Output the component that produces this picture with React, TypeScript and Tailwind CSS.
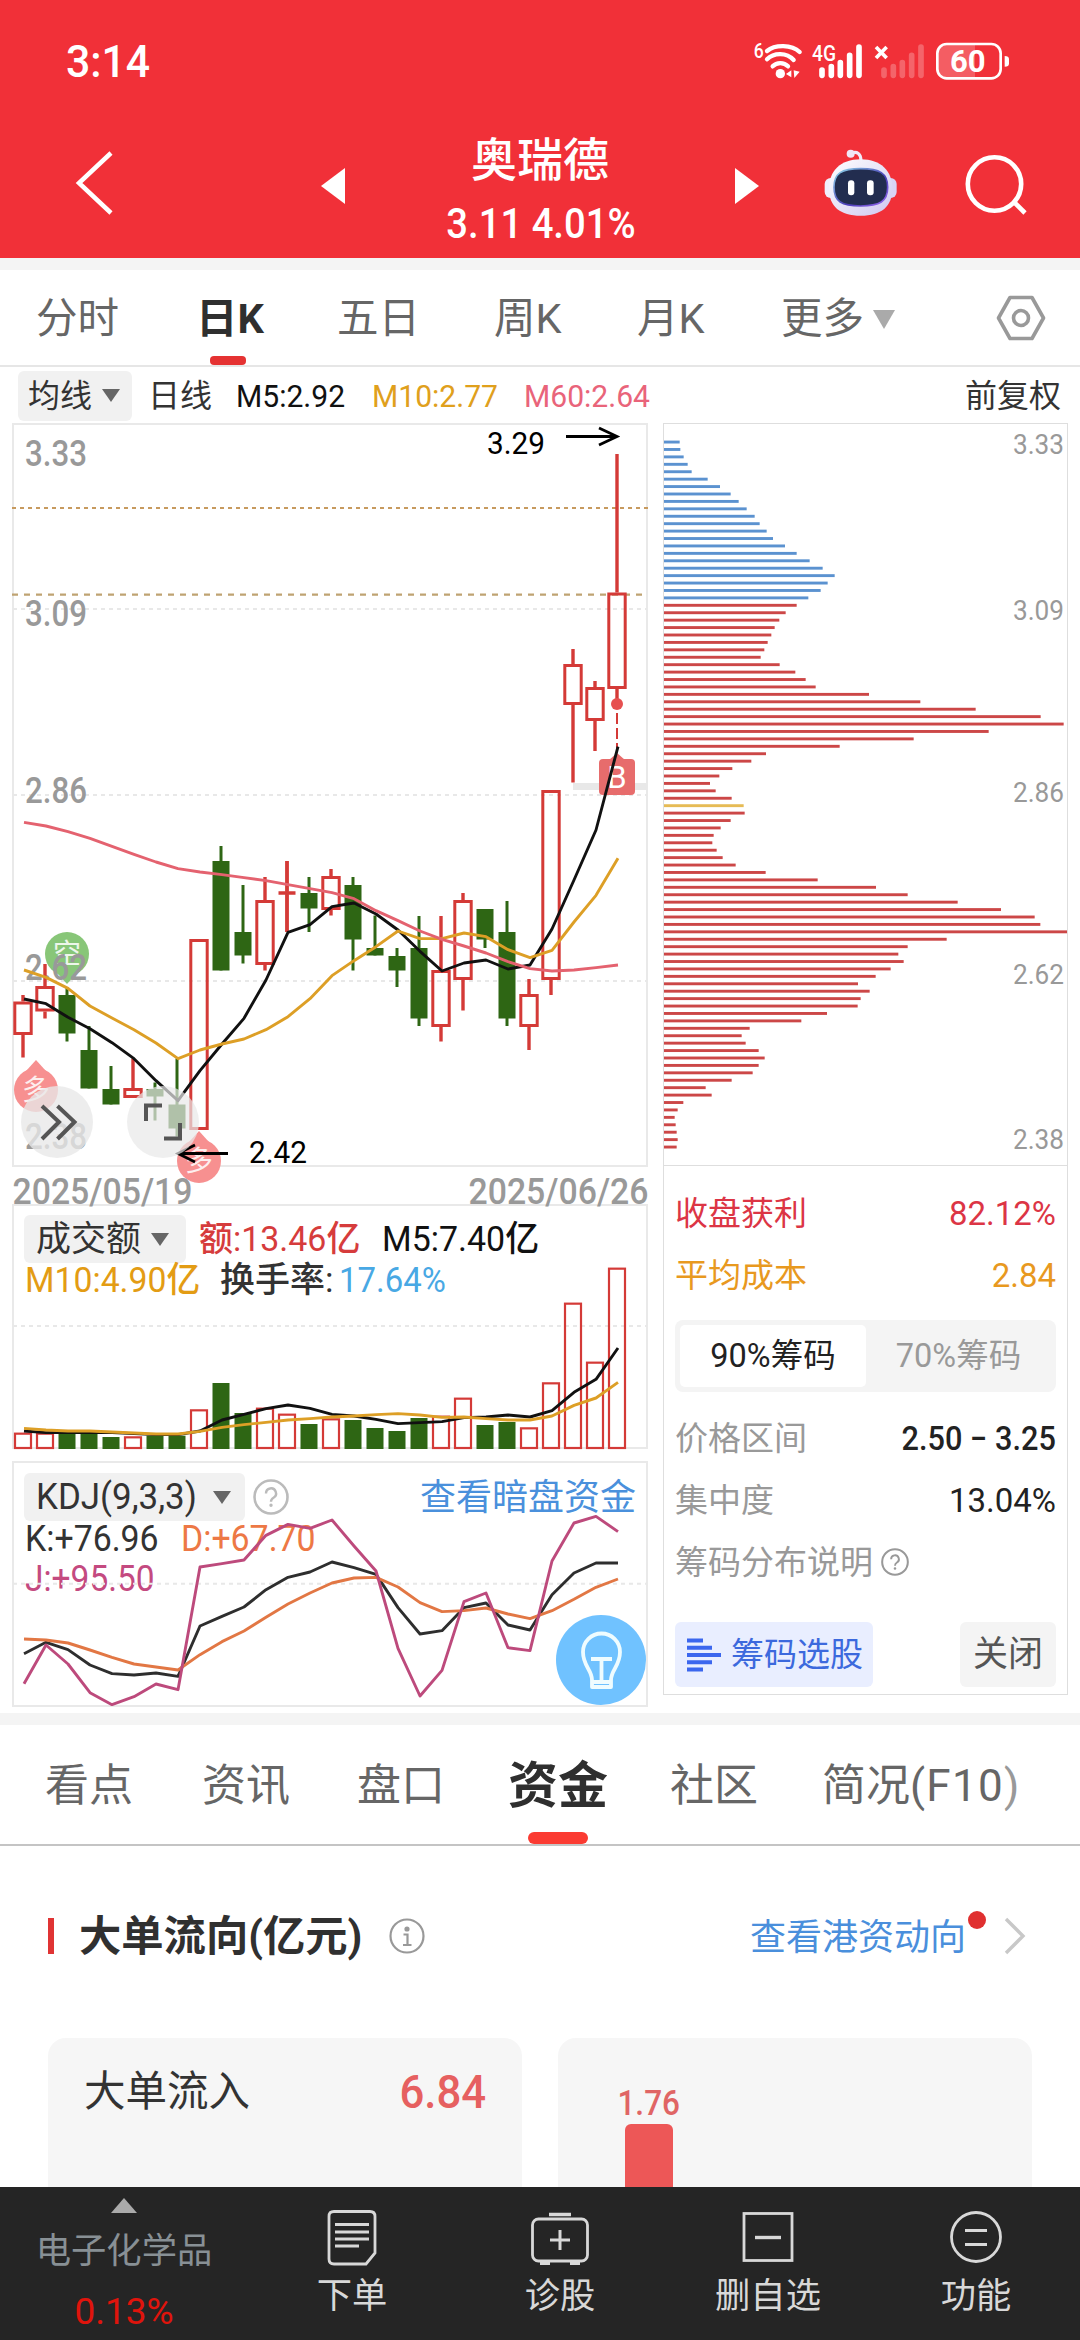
import type { ReactNode } from "react";

const STEP = 22;
const FIRST_X = 23;
const RED = "#d43a37";
const GREEN = "#2e6614";

type Candle = [up: boolean, high: number, top: number, bottom: number, low: number];

const CANDLES: Candle[] = [
  [true, 995, 1001.5, 1035, 1057.5],
  [true, 964, 986, 1011.5, 1018.5],
  [false, 987.5, 995, 1033.5, 1041.5],
  [false, 1026, 1050, 1088.5, 1088.5],
  [false, 1066, 1089, 1104.5, 1104.5],
  [true, 1058.5, 1088, 1098, 1098],
  [false, 1082.5, 1089, 1096.5, 1120.5],
  [false, 1058.5, 1104.5, 1128.5, 1136.5],
  [true, 939, 939, 1130, 1130],
  [false, 846, 861, 970.5, 970.5],
  [false, 885, 932, 955.5, 963.5],
  [true, 877, 900, 965, 970.5],
  [true, 861, 891.5, 894.5, 932],
  [false, 877, 893, 908.5, 932],
  [true, 869, 876, 910, 915.5],
  [false, 877, 885, 939.5, 970.5],
  [false, 915.5, 948, 955.5, 955.5],
  [false, 948, 956, 970.5, 987],
  [false, 916, 948, 1018.5, 1026],
  [true, 916, 970, 1027, 1041.5],
  [true, 893, 900, 980, 1010.5],
  [false, 909, 909, 939.5, 948],
  [false, 901, 932, 1018.5, 1026],
  [true, 979, 994, 1027, 1050],
  [true, 790, 790, 980, 995],
  [true, 649, 664, 705, 782.5],
  [true, 681, 687, 721, 751],
  [true, 454, 592.5, 689, 705],
];

// line series are kept in thirds of a pixel below each chart's base
const MA5 = [627, 641, 682, 716, 758, 806, 872, 932, 842, 762, 685, 570, 427, 404, 350, 339, 372, 420, 484, 543, 519, 510, 537, 525, 417, 270, 120, -130];
const MA10 = [540, 562, 595, 648, 684, 719, 759, 806, 780, 762, 747, 719, 680, 626, 557, 512, 470, 423, 446, 446, 429, 440, 479, 503, 481, 396, 316, 205];
const MA60 = [97, 108, 125, 145, 169, 193, 216, 236, 246, 254, 263, 272, 284, 296, 308, 326, 362, 392, 423, 448, 468, 489, 515, 536, 543, 540, 533, 525];

const VOLUME = [698, 698, 702, 702, 711, 709, 707, 707, 628, 549, 639, 623, 641, 672, 655, 660, 684, 693, 654, 647, 593, 675, 666, 682, 547, 308, 485, 203];
const VOL5 = [693, 698, 698, 698, 698, 701, 704, 704, 693, 660, 643, 626, 615, 625, 643, 648, 658, 671, 668, 665, 653, 651, 645, 651, 632, 577, 538, 444];
const VOL10 = [685, 690, 693, 693, 696, 699, 702, 702, 694, 682, 674, 667, 660, 656, 651, 648, 644, 641, 645, 652, 651, 656, 660, 660, 648, 616, 594, 547];

const K_LINE = [596, 562, 584, 630, 656, 660, 654, 664, 513, 484, 456, 404, 367, 351, 321, 338, 358, 458, 537, 527, 458, 444, 510, 525, 419, 354, 324, 324];
const D_LINE = [552, 555, 564, 585, 607, 627, 636, 645, 599, 560, 528, 487, 447, 414, 384, 369, 367, 396, 443, 470, 467, 459, 477, 491, 467, 433, 397, 372];
const J_LINE = [686, 570, 627, 713, 749, 725, 687, 704, 336, 326, 315, 241, 208, 220, 195, 273, 348, 580, 723, 646, 440, 414, 578, 587, 318, 204, 184, 230];

const CHIPS = [
  89, 91, 101, 113, 125, 173, 210, 242, 266, 290, 314, 329, 350, 369, 405, 440, 479, 518, 554, 533, 512, 475,
  440, 407, 388, 374, 364, 353, 343, 332, 389, 436, 467, 497, 657, 811, 977, 1172, 1241, 1016, 791, 569, 348, 304, 247, 208, 180,
  197, 245, 281, 284, 242, 212, 191, 187, 200, 218, 257, 347, 503, 678, 773, 923, 1053, 1154, 1171, 1251,
  890, 773, 745, 761, 722, 677, 624, 659, 632, 623, 531, 454, 299, 275, 287, 326, 344, 326, 308, 245,
  167, 185, 100, 83, 74, 77, 80, 83, 80,
];
const BLUE_COUNT = 22;
const AVERAGE_INDEX = 49;

const xAt = (i: number) => FIRST_X + i * STEP;

function Series({ values, base, color }: { values: number[]; base: number; color: string }) {
  const points = values.map((v, i) => `${xAt(i) + 1},${base + v / 3}`).join(" ");
  return <polyline points={points} fill="none" stroke={color} strokeWidth="2.9" strokeLinejoin="round" />;
}

function Caret({ className = "" }: { className?: string }) {
  return (
    <svg viewBox="0 0 18 13" className={`h-[13px] w-[18px] ${className}`}>
      <path d="M0 0H18L9 13Z" fill="currentColor" />
    </svg>
  );
}

function Help({ className }: { className: string }) {
  return (
    <svg viewBox="0 0 36 36" fill="none" stroke="currentColor" className={className}>
      <circle cx="18" cy="18" r="16.5" strokeWidth="2.6" />
      <path d="M13 14.5a5 5 0 1 1 7.5 4.2c-1.7 1-2.5 1.9-2.5 4" strokeWidth="2.4" />
      <circle cx="18" cy="26.3" r="0.9" strokeWidth="1.6" />
    </svg>
  );
}

function StatusIcons() {
  return (
    <svg viewBox="60 40 790 126" className="h-[42px] w-[263.33px]" fill="#fff">
      <text x="71" y="95" fontSize="60" fontWeight="500" textLength="30" lengthAdjust="spacingAndGlyphs">6</text>
      <g fill="none" stroke="#fff" strokeWidth="13" strokeLinecap="round">
        <path d="M111 73C135 53 185 53 209 76" />
        <path d="M111 98C132 77 170 77 191 100" />
        <path d="M128 119C140 106 162 106 174 119" />
      </g>
      <circle cx="151" cy="141" r="14" />
      <path d="M168 142L184 131V152ZM191 131L209 135L193 154Z" />
      <text x="246" y="103" fontSize="64" fontWeight="500" textLength="72" lengthAdjust="spacingAndGlyphs">4G</text>
      <g stroke="#fff" strokeWidth="17" strokeLinecap="round">
        <path d="M276 130V146M304 120V146M331 108V146M359 86V146M387 61V146" />
        <path d="M462 130V146M490 120V146M517 108V146M545 86V146M573 61V146" opacity="0.25" />
        <path d="M438 61L470 94M470 61L438 94" strokeWidth="11" strokeLinecap="butt" />
      </g>
      <path d="M650 53H735V153H650Q623 153 623 126V80Q623 53 650 53Z" opacity="0.22" />
      <rect x="622" y="52" width="190" height="103" rx="28" fill="none" stroke="#fff" strokeWidth="8" />
      <path d="M824 88Q837 88 837 97V111Q837 120 824 120Z" />
      <text x="660" y="137" fontSize="95" fontWeight="700" textLength="107" lengthAdjust="spacingAndGlyphs">60</text>
    </svg>
  );
}

function Robot() {
  return (
    <svg viewBox="280 370 226 208" className="h-[69.33px] w-[75.33px]">
      <defs>
        <linearGradient id="shell" x1="0" y1="0" x2="1" y2="1">
          <stop offset="0" stopColor="#ffffff" />
          <stop offset="1" stopColor="#cfc8f0" />
        </linearGradient>
        <linearGradient id="rim" x1="0" y1="0" x2="1" y2="1">
          <stop offset="0" stopColor="#8fd8e8" />
          <stop offset="0.6" stopColor="#4a3cb8" />
          <stop offset="1" stopColor="#9a6cf0" />
        </linearGradient>
      </defs>
      <path d="M365 386C382 378 394 388 394 408" fill="none" stroke="#f1eafa" strokeWidth="9" />
      <circle cx="363" cy="387" r="12" fill="#f1e6f6" />
      <rect x="285" y="460" width="40" height="60" rx="18" fill="#f0eefc" />
      <rect x="461" y="460" width="40" height="60" rx="18" fill="#d9d3f5" />
      <path d="M393 404C455 404 488 440 488 492C488 545 455 573 393 573C331 573 298 545 298 492C298 440 331 404 393 404Z" fill="url(#shell)" />
      <path d="M393 432C450 432 474 445 474 488C474 531 450 544 393 544C336 544 313 531 313 488C313 445 336 432 393 432Z" fill="#222d4f" stroke="url(#rim)" strokeWidth="5" />
      <rect x="355" y="467" width="19" height="45" rx="9" fill="#fff" />
      <rect x="412" y="467" width="20" height="45" rx="9" fill="#fff" />
    </svg>
  );
}

function Header() {
  return (
    <header className="h-[258px] bg-[#f13038] text-white">
      <div className="flex h-[122px] items-center justify-between pr-[67px] pl-[66px]">
        <span className="origin-left scale-x-[0.95] text-[45px] leading-none font-medium">3:14</span>
        <StatusIcons />
      </div>
      <div className="flex h-[136px]">
        <div className="w-[321px] pt-[28px] pl-[74px]">
          <svg viewBox="0 0 40 66" className="h-[66px] w-[40px]" fill="none" stroke="#fff" strokeWidth="4.5">
            <path d="M37 3L5 33L37 63" />
          </svg>
        </div>
        <div className="flex w-[438px] justify-between">
          <svg viewBox="0 0 24 36" className="mt-[46px] h-[36px] w-[24px]"><path d="M24 0V36L0 18Z" fill="#fff" /></svg>
          <div className="flex flex-col items-center pt-[15px]">
            <span className="text-[46px] leading-[46px] font-medium">奥瑞德</span>
            <span className="mt-[18px] ml-[2px] scale-x-[0.91] text-[42px] leading-[46px] font-medium whitespace-nowrap">3.11 4.01%</span>
          </div>
          <svg viewBox="0 0 24 36" className="mt-[46px] h-[36px] w-[24px]"><path d="M0 0V36L24 18Z" fill="#fff" /></svg>
        </div>
        <div className="flex pt-[26px] pl-[64px]">
          <Robot />
          <svg viewBox="0 0 66 66" className="mt-[6px] ml-[66px] h-[66px] w-[66px]" fill="none" stroke="#fff" strokeWidth="4.6">
            <circle cx="30.5" cy="30" r="26.7" />
            <path d="M50 48L61 59" />
          </svg>
        </div>
      </div>
    </header>
  );
}

function PeriodTabs() {
  return (
    <nav className="flex h-[97px] items-center border-b-2 border-[#e6e6e6] pl-[36px] text-[41.5px] leading-none text-[#666]">
      <span className="w-[160px] pt-[3px]">分时</span>
      <span className="relative flex h-full w-[141px] items-center pt-[3px] font-bold text-[#2f2f2f]">
        日K
        <i className="absolute bottom-0 left-[14px] h-[9px] w-[36px] rounded-[4px] bg-[#e53232]" />
      </span>
      <span className="w-[157px] pt-[3px]">五日</span>
      <span className="w-[143px] pt-[3px]">周K</span>
      <span className="w-[144px] pt-[3px]">月K</span>
      <span className="flex w-[215px] items-center gap-[9px] pt-[3px]">
        更多
        <svg viewBox="0 0 22 19" className="h-[19px] w-[22px]"><path d="M0 0H22L11 19Z" fill="#aaa" /></svg>
      </span>
      <svg viewBox="0 0 50 46" className="h-[46px] w-[50px]" fill="none" stroke="#999" strokeWidth="3.6" strokeLinejoin="round">
        <path d="M14 2.5H36L47.500 23L36 43.500H14L2.500 23Z" />
        <circle cx="25" cy="23" r="7.5" />
      </svg>
    </nav>
  );
}

function AverageRow() {
  return (
    <div className="flex h-[57px] items-center text-[32px] leading-none whitespace-nowrap text-[#333]">
      <span className="ml-[18px] flex h-[50px] w-[114px] items-center gap-[10px] rounded-[6px] bg-[#f1f1f1] pl-[10px]">
        均线 <Caret className="text-[#666]" />
      </span>
      <span className="ml-[16px] w-[88px]">日线</span>
      <span className="w-[136px] origin-left scale-x-[0.94] font-[450] text-[#111]">M5:2.92</span>
      <span className="w-[152px] origin-left scale-x-[0.94] font-[450] text-[#e0a01c]">M10:2.77</span>
      <span className="origin-left scale-x-[0.94] font-[450] text-[#e9647a]">M60:2.64</span>
      <span className="mr-[19px] ml-auto">前复权</span>
    </div>
  );
}

function AxisLabel({ x, y, children }: { x: number; y: number; children: string }) {
  return (
    <text x={x} y={y} fontSize="36" fontWeight="500" fill="#999" textLength="62" lengthAdjust="spacingAndGlyphs">
      {children}
    </text>
  );
}

function Marker({ x, y, up, color, children }: { x: number; y: number; up: boolean; color: string; children: string }) {
  const d = up ? -1 : 1;
  return (
    <g>
      <path d={`M${x - 10} ${y + d * 19}L${x} ${y + d * 30}L${x + 10} ${y + d * 19}Z`} fill={color} />
      <circle cx={x} cy={y} r="22" fill={color} />
      <text x={x} y={y + 10} fontSize="28" textAnchor="middle" fill="#fff" opacity="0.85">{children}</text>
    </g>
  );
}

function CandleChart() {
  return (
    <svg viewBox="0 424 650 780" className="relative z-10 block h-[780px] w-[650px] overflow-visible">
      <rect x="13" y="424" width="634" height="742" fill="none" stroke="#e9e9e9" strokeWidth="2" />
      <path d="M13 609H647M13 795H647M13 981H647" stroke="#e8e8e8" strokeWidth="2" strokeDasharray="4 4" />
      <path d="M12 508H648" stroke="#c79a5e" strokeWidth="2.2" strokeDasharray="4 4" />
      <path d="M12 594.700H648" stroke="#bfa372" strokeWidth="2.2" strokeDasharray="6 6" />
      <rect x="573" y="783" width="74" height="7" fill="#e8e8e8" />
      <Marker x={67} y={954} up={false} color="#88c678">空</Marker>
      <Marker x={36} y={1090} up color="#f79090">多</Marker>
      <Marker x={199} y={1161} up color="#f79090">多</Marker>
      <AxisLabel x={25} y={466}>3.33</AxisLabel>
      <AxisLabel x={25} y={626}>3.09</AxisLabel>
      <AxisLabel x={25} y={803}>2.86</AxisLabel>
      <AxisLabel x={25} y={979.5}>2.62</AxisLabel>
      <AxisLabel x={25} y={1148.5}>2.38</AxisLabel>
      {CANDLES.map(([up, high, top, bottom, low], i) => {
        const x = xAt(i);
        return up ? (
          <g key={i} fill="none" stroke={RED} strokeWidth="3">
            <path d={`M${x} ${high}V${top}M${x} ${bottom}V${low}`} strokeWidth="3.4" />
            {bottom - top < 5 ? (
              <path d={`M${x} ${high}V${low}M${x - 8.5} ${top + 1.5}H${x + 8.5}`} strokeWidth="3.4" />
            ) : (
              <rect x={x - 8.2} y={top + 1.5} width="16.4" height={bottom - top - 3} />
            )}
          </g>
        ) : (
          <g key={i}>
            <path d={`M${x} ${high}V${low}`} stroke={GREEN} strokeWidth="3" />
            <rect x={x - 8.5} y={top} width="17" height={bottom - top} fill={GREEN} />
          </g>
        );
      })}
      <circle cx="617" cy="704" r="6" fill="#e65050" />
      <path d="M617 713V748" stroke={RED} strokeWidth="2" strokeDasharray="11 4" />
      <path d="M609 760L617 753L625 760Z" fill="#e76c6c" />
      <rect x="599" y="759" width="36" height="36" rx="4" fill="#e76c6c" />
      <text x="617" y="788" fontSize="31" textAnchor="middle" fill="#fff">B</text>
      <Series values={MA5} base={790} color="#111" />
      <Series values={MA10} base={790} color="#dd9f26" />
      <Series values={MA60} base={790} color="#e4626f" />
      <g fill="none" stroke="#000" strokeWidth="2.8">
        <path d="M566 436.500H617M599 428L617 436.500L599 445" />
        <path d="M228 1153.500H178M195 1145L178 1153.500L195 1162" />
      </g>
      <text x="487" y="453.5" fontSize="31" textLength="58" lengthAdjust="spacingAndGlyphs">3.29</text>
      <text x="249" y="1162.5" fontSize="31" textLength="58" lengthAdjust="spacingAndGlyphs">2.42</text>
      <circle cx="57" cy="1122" r="36" fill="#e8e8e8" opacity="0.78" />
      <circle cx="163" cy="1122" r="36" fill="#e8e8e8" opacity="0.7" />
      <g fill="none" stroke="#555" strokeWidth="4">
        <path d="M42 1106L59 1122L42 1139M57.500 1106L74.500 1122L57.500 1139" />
        <path d="M146 1121V1105.500H162M164 1138.500H180V1123" />
      </g>
      <g fontSize="36" fontWeight="500" fill="#999">
        <text x="12.5" y="1203.5" textLength="180" lengthAdjust="spacingAndGlyphs">2025/05/19</text>
        <text x="468.5" y="1203.5" textLength="180" lengthAdjust="spacingAndGlyphs">2025/06/26</text>
      </g>
    </svg>
  );
}

function VolumePanel() {
  return (
    <section className="relative h-[257px] w-[650px]">
      <svg viewBox="0 1204 650 257" className="absolute inset-0 h-full w-full">
        <rect x="13" y="1205" width="634" height="243" fill="none" stroke="#e9e9e9" strokeWidth="2" />
        <path d="M13 1326H647" stroke="#e8e8e8" strokeWidth="2" strokeDasharray="4 4" />
        {VOLUME.map((v, i) => {
          const y = 1200 + v / 3;
          const up = CANDLES[i][0];
          return (
            <rect
              key={i}
              x={xAt(i) - (up ? 8 : 8.5)}
              y={up ? y + 1 : y}
              width={up ? 16 : 17}
              height={1449 - y - (up ? 2 : 0)}
              fill={up ? "none" : GREEN}
              stroke={up ? RED : "none"}
              strokeWidth="2.2"
            />
          );
        })}
        <Series values={VOL5} base={1200} color="#111" />
        <Series values={VOL10} base={1200} color="#dd9f26" />
      </svg>
      <div className="relative text-[35px] leading-none font-[450] whitespace-nowrap">
        <div className="flex items-center pt-[11px]">
          <span className="ml-[24px] flex h-[48px] w-[162px] items-center gap-[10px] rounded-[6px] bg-[#f1f1f1] pl-[12px] font-normal text-[#333]">
            成交额 <Caret className="text-[#666]" />
          </span>
          <span className="ml-[13px] w-[183px] origin-left scale-x-[0.97] text-[#d63c3c]">额:13.46亿</span>
          <span className="origin-left scale-x-[0.97] text-[#111]">M5:7.40亿</span>
        </div>
        <div className="flex h-[34px] items-center pl-[25px]">
          <span className="w-[195px] origin-left scale-x-[0.965] text-[#e39c14]">M10:4.90亿</span>
          <span className="w-[119px] text-[#333]">换手率:</span>
          <span className="origin-left scale-x-[0.94] text-[#48a8e4]">17.64%</span>
        </div>
      </div>
    </section>
  );
}

function KdjPanel() {
  return (
    <section className="relative h-[252px] w-[650px]">
      <div className="text-[36px] leading-none font-[450] whitespace-nowrap">
        <div className="flex items-center pt-[12px]">
          <span className="ml-[24px] flex h-[48px] w-[221px] items-center rounded-[6px] bg-[#f1f1f1] pl-[12px] text-[#333]">
            <span className="w-[177px]">
              <span className="inline-block origin-left scale-x-[0.97]">KDJ(9,3,3)</span>
            </span>
            <Caret className="text-[#666]" />
          </span>
          <Help className="ml-[8px] h-[36px] w-[36px] text-[#bbb]" />
          <span className="mr-[14px] ml-auto pt-[2px] text-[36px] font-normal text-[#4a90dc]">查看暗盘资金</span>
        </div>
        <div className="flex h-[36px] items-center pl-[25px]">
          <span className="w-[156px] origin-left scale-x-[0.94] text-[#333]">K:+76.96</span>
          <span className="origin-left scale-x-[0.94] text-[#ed7845]">D:+67.70</span>
        </div>
        <div className="flex h-[44px] items-center pl-[25px]">
          <span className="origin-left scale-x-[0.93] text-[#c44a80]">J:+95.50</span>
        </div>
      </div>
      <svg viewBox="0 1461 650 252" className="absolute inset-0 h-full w-full">
        <rect x="13" y="1462" width="634" height="244" fill="none" stroke="#e9e9e9" strokeWidth="2" />
        <path d="M13 1583.700H647" stroke="#e8e8e8" strokeWidth="2" strokeDasharray="4 4" />
        <Series values={K_LINE} base={1455} color="#2e2e2e" />
        <Series values={D_LINE} base={1455} color="#e27744" />
        <Series values={J_LINE} base={1455} color="#bd4a7c" />
        <circle cx="601" cy="1660" r="45" fill="#70c2ff" />
        <g fill="none" stroke="#effcff" strokeWidth="3.8" strokeLinejoin="round">
          <path d="M592 1680C592 1670 583 1666 583 1652A18.500 18.500 0 0 1 620 1652C620 1666 611 1670 611 1680V1687H592ZM592 1682H611" />
          <path d="M591 1659H612M601.500 1659V1680" />
        </g>
      </svg>
    </section>
  );
}

function ChipRow({ label, value, className = "" }: { label: string; value: string; className?: string }) {
  return (
    <div className={`flex items-center justify-between ${className}`}>
      <span>{label}</span>
      <span>{value}</span>
    </div>
  );
}

function ChipPanel() {
  return (
    <aside className="-mt-px ml-[13px] h-[1272px] w-[405px] border border-[#dedede] text-[33px] leading-none">
      <svg viewBox="664 424 403 741" className="block h-[741px] w-[403px] overflow-visible">
        {CHIPS.map((end, i) => (
          <rect
            key={i}
            x="664"
            y={442 + i * 7.421 - 1.4}
            width={(end - 42) / 3}
            height="2.9"
            fill={i < BLUE_COUNT ? "#5b92d0" : i === AVERAGE_INDEX ? "#e6bb55" : "#cc4747"}
          />
        ))}
        <g fontSize="28" fill="#999">
          <text x="1013" y="453.5" textLength="51" lengthAdjust="spacingAndGlyphs">3.33</text>
          <text x="1013" y="619.5" textLength="51" lengthAdjust="spacingAndGlyphs">3.09</text>
          <text x="1013" y="801.5" textLength="51" lengthAdjust="spacingAndGlyphs">2.86</text>
          <text x="1013" y="983.5" textLength="51" lengthAdjust="spacingAndGlyphs">2.62</text>
          <text x="1013" y="1149" textLength="51" lengthAdjust="spacingAndGlyphs">2.38</text>
        </g>
      </svg>
      <div className="h-[529px] border-t border-[#dedede] px-[11px] pt-[16px]">
        <ChipRow label="收盘获利" value="82.12%" className="h-[62px] text-[#dc3545]" />
        <ChipRow label="平均成本" value="2.84" className="h-[62px] text-[#e8991f]" />
        <div className="mt-[14px] flex h-[72px] items-center rounded-[8px] bg-[#f4f4f4] p-[5px] text-[32.5px]">
          <span className="flex h-full w-[186px] items-center justify-center rounded-[5px] bg-white text-[#222]">90%筹码</span>
          <span className="flex-1 text-center text-[#999]">70%筹码</span>
        </div>
        <div className="mt-[15px] flex h-[62px] items-center justify-between text-[#999]">
          <span>价格区间</span>
          <span className="origin-right scale-x-[0.93] font-medium text-[#222]">2.50 − 3.25</span>
        </div>
        <div className="flex h-[62px] items-center justify-between text-[#999]">
          <span>集中度</span>
          <span className="text-[#222]">13.04%</span>
        </div>
        <div className="flex h-[62px] items-center gap-[8px] text-[#999]">
          筹码分布说明 <Help className="h-[28px] w-[28px]" />
        </div>
        <div className="mt-[29px] flex justify-between">
          <span className="flex h-[65px] w-[198px] items-center gap-[10px] rounded-[6px] bg-[#e9eeff] pl-[12px] text-[#3c69dd]">
            <svg viewBox="0 0 34 34" className="h-[34px] w-[34px]" stroke="#3b66ee" strokeWidth="4">
              <path d="M0 2.500H16M0 9.700H25M0 17H34M0 24.200H25M0 31.500H16" />
            </svg>
            筹码选股
          </span>
          <span className="flex h-[65px] w-[96px] items-center justify-center rounded-[6px] bg-[#f4f4f4] text-[35px] text-[#555]">关闭</span>
        </div>
      </div>
    </aside>
  );
}

function SectionTabs() {
  return (
    <nav className="flex h-[121px] items-center border-b-2 border-[#c4c4c4] pl-[45px] text-[44px] leading-none whitespace-nowrap text-[#666]">
      <span className="w-[157px] pt-[3px]">看点</span>
      <span className="w-[155px] pt-[3px]">资讯</span>
      <span className="w-[151px] pt-[3px]">盘口</span>
      <span className="relative flex h-full w-[162px] items-center pt-[2px] text-[50px] font-bold text-[#2f2f2f]">
        资金
        <i className="absolute bottom-0 left-[20px] h-[12px] w-[60px] rounded-[6px] bg-[#fb3b32]" />
      </span>
      <span className="w-[152px] pt-[3px]">社区</span>
      <span className="pt-[3px]">
        简况<span className="tracking-[1.3px]">(F10<span className="text-[#999]">)</span></span>
      </span>
    </nav>
  );
}

function FundFlow() {
  return (
    <section className="h-[341px] overflow-hidden">
      <div className="flex h-[180px] items-center pl-[48px]">
        <i className="h-[36px] w-[6px] bg-[#e03434]" />
        <h2 className="ml-[25px] pt-[2px] text-[42.3px] leading-none font-bold text-[#303030]">大单流向(亿元)</h2>
        <svg viewBox="0 0 36 36" className="ml-[27px] h-[36px] w-[36px]" fill="none" stroke="#999" strokeWidth="2.2">
          <circle cx="18" cy="18" r="16.500" />
          <circle cx="18" cy="11" r="1.500" fill="#999" />
          <path d="M14.500 16.500H18.500V27M14 27H22.500" />
        </svg>
        <span className="relative ml-auto pt-[3px] text-[36px] leading-none text-[#4a8fdc]">
          查看港资动向
          <i className="absolute -top-[6px] -right-[20px] h-[18px] w-[18px] rounded-full bg-[#e03030]" />
        </span>
        <svg viewBox="0 0 22 38" className="mr-[54px] ml-[38px] h-[38px] w-[22px]" fill="none" stroke="#c8c8c8" strokeWidth="3.4">
          <path d="M2 2L19 19L2 36" />
        </svg>
      </div>
      <div className="mt-[12px] flex gap-[36px] px-[48px]">
        <div className="flex h-[220px] w-[474px] items-start justify-between rounded-[18px] bg-[#f6f6f6] px-[36px] pt-[32px]">
          <span className="text-[41.500px] leading-[44px] text-[#333]">大单流入</span>
          <span className="origin-right scale-x-[0.93] text-[47px] leading-[44px] font-medium text-[#e66060]">6.84</span>
        </div>
        <div className="h-[220px] w-[474px] rounded-[18px] bg-[#f6f6f6] pl-[60px]">
          <div className="flex w-[62px] flex-col items-center pt-[46px]">
            <span className="scale-x-[0.9] text-[35px] leading-[40px] font-medium text-[#e06565]">1.76</span>
            <i className="h-[140px] w-[48px] rounded-t-[6px] bg-[#ed5757]" />
          </div>
        </div>
      </div>
    </section>
  );
}

function NavItem({ label, children }: { label: string; children: ReactNode }) {
  return (
    <div className="flex w-[208px] flex-col items-center pt-[20px]">
      <svg viewBox="0 0 60 60" className="h-[60px] w-[60px]" fill="none" stroke="#d8d8d8" strokeWidth="2.800">
        {children}
      </svg>
      <span className="mt-[10px] text-[35.300px] leading-[38px] text-[#d8d8d8]">{label}</span>
    </div>
  );
}

function BottomNav() {
  return (
    <footer className="flex h-[153px] bg-[#252525]">
      <div className="flex w-[248px] flex-col items-center pt-[11px]">
        <svg viewBox="0 0 26 15" className="h-[15px] w-[26px]"><path d="M0 15L13 0L26 15Z" fill="#aaa" /></svg>
        <span className="mt-[19px] text-[35.300px] leading-[38px] text-[#889095]">电子化学品</span>
        <span className="mt-[22px] text-[37px] leading-[40px] text-[#e0140c]">0.13%</span>
      </div>
      <NavItem label="下单">
        <path d="M12 4.500H48Q53 4.500 53 9.500V46L44 57H12Q7 57 7 52V9.500Q7 4.500 12 4.500Z" />
        <path d="M13 17.500H47M13 25H47M13 32H47M13 39H37" strokeWidth="3" />
      </NavItem>
      <NavItem label="诊股">
        <rect x="2.500" y="12" width="55" height="42" rx="6" />
        <path d="M19 7.500H41" strokeWidth="3.500" />
        <path d="M30 23V43M20 33H40M10 56.500H20M40 56.500H50" strokeWidth="3" />
      </NavItem>
      <NavItem label="删自选">
        <rect x="6" y="6.500" width="48" height="47" />
        <path d="M17 30.500H43" strokeWidth="3.400" />
      </NavItem>
      <NavItem label="功能">
        <circle cx="30" cy="30" r="24.500" />
        <path d="M19 23.500H41M19 37.500H41" strokeWidth="3" />
      </NavItem>
    </footer>
  );
}

export default function App() {
  return (
    <div className="h-[2340px] w-[1080px] overflow-hidden bg-white font-['Roboto','Noto_Sans_CJK_SC',sans-serif]">
      <Header />
      <div className="h-[12px] bg-[#f4f4f4]" />
      <PeriodTabs />
      <AverageRow />
      <main className="flex h-[1289px]">
        <div className="w-[650px]">
          <CandleChart />
          <VolumePanel />
          <KdjPanel />
        </div>
        <ChipPanel />
      </main>
      <div className="h-[12px] bg-[#f4f4f4]" />
      <SectionTabs />
      <FundFlow />
      <BottomNav />
    </div>
  );
}
